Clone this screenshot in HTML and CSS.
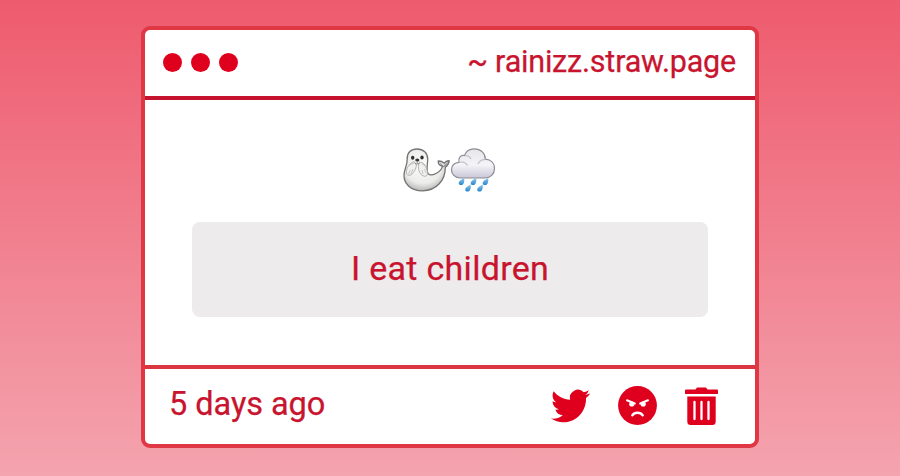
FILE: index.html
```html
<!DOCTYPE html>
<html lang="en">
<head>
<meta charset="utf-8">
<title>rainizz.straw.page</title>
<link rel="stylesheet" href="styles.css">
</head>
<body>
<main class="card">
  <header class="bar">
    <div class="dots"><span class="dot"></span><span class="dot"></span><span class="dot"></span></div>
    <div class="site">~ rainizz.straw.page</div>
  </header>
  <section class="content">
    <svg class="emoji" width="94" height="46" viewBox="0 0 94 46">
      <defs>
        <radialGradient id="fur" cx=".42" cy=".4" r=".65"><stop offset="0" stop-color="#fdfdfd"/><stop offset=".65" stop-color="#ececea"/><stop offset="1" stop-color="#aaa"/></radialGradient>
        <linearGradient id="cloud" x2="0" y2="1"><stop offset="0" stop-color="#e6e6e9"/><stop offset=".55" stop-color="#f5f4f9"/><stop offset="1" stop-color="#c9c6d6"/></linearGradient>
        <linearGradient id="rain" x2="0" y2="1"><stop offset="0" stop-color="#91ccee"/><stop offset="1" stop-color="#2684cd"/></linearGradient>
        <path id="drop" d="M2.600-4C3.200-.5 2.400 3-.4 3.100-3.500 3.200-3.500-.2-1-1.700Z"/>
      </defs>
      <path d="M5.200 12C5 5.500 9 2 15.200 2S25.700 6 25.700 12C25.800 16 24.500 20 25.300 24.500C26 28.500 29.500 28.800 34 26.500C38.500 24.200 40.200 21.500 40.300 19.200C37.500 18.500 36 16.500 36.300 14C38.500 14 41 15 42.300 16.200C43.500 14.500 45.500 13.500 47.200 13.800C46.800 17 45 19 43.300 20.200C43.500 33 34.500 43.800 20.500 43.800C8.500 43.800 2 36.500 2 28.500C2 22 5.500 18.500 5.200 12Z" fill="url(#fur)" stroke="#747474" stroke-width="1.300"/>
      <path d="M37 14.500L41.500 19L46.500 14.500L43 19.500L40.500 20.500Z" fill="#777" opacity=".75"/>
      <path d="M12 14.500C8 16 3.500 21 4.500 27C8 31 13.500 25 14.500 18ZM17.500 15C15 19 16.500 29 23 29.300C28 29 24.500 19 21 16Z" fill="#f0f0ee" stroke="#a5a5a5" stroke-width=".8"/>
      <path d="M8.500 23l-2 4M11 22l-2 5M20 23l1 4M22.500 22l1.500 4M7 18l5-2M20 17l4 2" fill="none" stroke="#aaa" stroke-width=".6"/>
      <ellipse cx="10.700" cy="10.800" rx="1.700" ry="2" fill="#303030"/><ellipse cx="20" cy="10.400" rx="1.700" ry="2" fill="#303030"/>
      <ellipse cx="15.300" cy="13" rx="2.100" ry="1.500" fill="#383838"/>
      <path d="M15.300 14v2.500M12.800 16.500q2.500 1 4.800 0" fill="none" stroke="#777" stroke-width=".8"/>
      <path d="M58.500 31C52.500 31 49.500 27 49.500 22.500C49.500 18.500 52.500 15.500 57 15.300C56 11 58.500 7.800 62.500 8.500C64 4.200 67.500 1.800 72 1.800C79 1.800 83.500 6.500 83.300 12.200C89.500 12.500 92.500 16.500 92.500 21.500C92.500 27 88.500 31 82.500 31Z" fill="url(#cloud)" stroke="#8d8b96" stroke-width="1.200"/>
      <path d="M57.500 15.300C61 14.500 64 16 65.500 18.500M63 8.500C66 8.500 68 10 69 12M83.500 12.200C80 12.500 77 14.500 76 17" fill="none" stroke="#bbb9c2" stroke-width="1.600" opacity=".7"/>
      <g fill="url(#rain)">
        <use href="#drop" x="59.500" y="35"/><use href="#drop" x="71.500" y="35"/><use href="#drop" x="83.500" y="35"/><use href="#drop" x="66" y="41.500"/><use href="#drop" x="78" y="41.500"/>
      </g>
    </svg>
    <div class="message">I eat children</div>
  </section>
  <footer class="foot">
    <div class="time">5 days ago</div>
    <div class="actions">
      <svg width="39" height="40" viewBox="0 0 24 24" preserveAspectRatio="none"><path d="M23.953 4.570a10 10 0 01-2.825.775 4.958 4.958 0 002.163-2.723c-.951.555-2.005.959-3.127 1.184a4.920 4.920 0 00-8.384 4.482C7.690 8.095 4.067 6.130 1.640 3.162a4.822 4.822 0 00-.666 2.475c0 1.710.870 3.213 2.188 4.096a4.904 4.904 0 01-2.228-.616v.060a4.923 4.923 0 003.946 4.827 4.996 4.996 0 01-2.212.085 4.936 4.936 0 004.604 3.417 9.867 9.867 0 01-6.102 2.105c-.390 0-.779-.023-1.170-.067a13.995 13.995 0 007.557 2.209c9.053 0 13.998-7.496 13.998-13.985 0-.210 0-.420-.015-.630A9.935 9.935 0 0024 4.590z"/></svg>
      <svg width="39" height="39" viewBox="0 0 39 39"><circle cx="19.500" cy="19.500" r="19.400"/><g fill="none" stroke="#fff" stroke-linecap="round"><path d="M9 14.300L16.800 17.500M30 14.300L22.200 17.500" stroke-width="2"/><path d="M14.300 29.300C16.500 25.800 22.500 25.800 24.700 29.300" stroke-width="2.400"/></g><circle cx="13.800" cy="18" r="2.600" fill="#fff"/><circle cx="25.200" cy="18" r="2.600" fill="#fff"/></svg>
      <svg width="33" height="38" viewBox="0 0 33 38"><path d="M1 2.500H10.500L12 .5H21L22.500 2.500H32Q33 2.500 33 3.500V7H0V3.500Q0 2.500 1 2.500ZM2.300 9.500H30.700V34.500Q30.700 38 27.300 38H5.700Q2.300 38 2.300 34.500Z"/><path d="M9.500 15V32M16.500 15V32M23.500 15V32" fill="none" stroke="#fff" stroke-width="2.300" stroke-linecap="round"/></svg>
    </div>
  </footer>
</main>
</body>
</html>
```
FILE: styles.css
```css
* { box-sizing: border-box; }
body {
  margin: 0;
  height: 476px;
  padding-top: 26px;
  overflow: hidden;
  background: linear-gradient(#ee5b6e, #f4a4af);
  font-family: Roboto, sans-serif;
  color: #c8142e;
  -webkit-text-stroke: 0.25px #c8142e;
}
.card {
  width: 618px;
  height: 422px;
  margin: 0 auto;
  display: flex;
  flex-direction: column;
  background: #fff;
  border: 4px solid #df3844;
  border-radius: 9px;
}
.bar {
  height: 70px;
  padding: 0 19px 2px 18px;
  display: flex;
  align-items: center;
  justify-content: space-between;
  border-bottom: 4px solid #c5122e;
}
.dots { display: flex; gap: 9px; }
.dot { width: 19px; height: 19px; border-radius: 50%; background: #df001d; }
.site { font-size: 30.5px; line-height: 36px; letter-spacing: -0.2px; }
.content {
  height: 265px;
  padding: 47px 47px 0;
  display: flex;
  flex-direction: column;
  align-items: center;
}
.emoji { flex: none; margin: 0 2px 29px 0; }
.message {
  width: 516px;
  height: 95px;
  border-radius: 8px;
  background: #edebec;
  font-size: 34px;
  line-height: 92px;
  letter-spacing: 0.3px;
  text-align: center;
}
.foot {
  flex: 1;
  padding: 0 37px 2px 24px;
  display: flex;
  align-items: center;
  justify-content: space-between;
  border-top: 4px solid #dc3542;
}
.time { padding-bottom: 3px; font-size: 32.5px; line-height: 38px; letter-spacing: -0.05px; }
.actions { display: flex; align-items: center; gap: 28px; fill: #df001d; }
```
